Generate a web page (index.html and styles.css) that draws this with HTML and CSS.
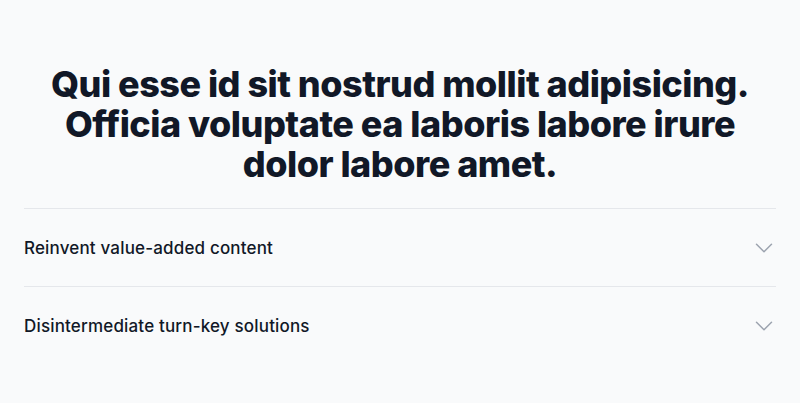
FILE: index.html
```html
<!DOCTYPE html>
<html lang="en">
<head>
<meta charset="utf-8">
<link rel="stylesheet" href="styles.css">
</head>
<body>
<div class="wrap">
  <div class="inner">
    <h2 class="title">Qui esse id sit nostrud mollit adipisicing. Officia voluptate ea laboris labore irure dolor labore amet.</h2>
    <dl class="faq">
      <div class="item">
        <dt>
          <button class="q" type="button">
            <span class="label">Reinvent value-added content</span>
            <span class="icon"><svg viewBox="0 0 24 24" fill="none" stroke="currentColor" stroke-width="1.5"><path stroke-linecap="round" stroke-linejoin="round" d="M19.5 8.25l-7.5 7.5-7.5-7.5"/></svg></span>
          </button>
        </dt>
      </div>
      <div class="item">
        <dt>
          <button class="q" type="button">
            <span class="label">Disintermediate turn-key solutions</span>
            <span class="icon"><svg viewBox="0 0 24 24" fill="none" stroke="currentColor" stroke-width="1.5"><path stroke-linecap="round" stroke-linejoin="round" d="M19.5 8.25l-7.5 7.5-7.5-7.5"/></svg></span>
          </button>
        </dt>
      </div>
    </dl>
  </div>
</div>
</body>
</html>
```

FILE: styles.css
```css
* { box-sizing: border-box; }
html, body { margin: 0; padding: 0; }
body {
  background: #f9fafb;
  font-family: Inter, "Noto Sans", sans-serif;
  color: #111827;
}
.wrap {
  padding: 64px 24px 40px;
}
.inner {
  max-width: 896px;
  margin: 0 auto;
}
.title {
  margin: 0;
  text-align: center;
  font-size: 36px;
  line-height: 40px;
  font-weight: 800;
  letter-spacing: -0.014em;
  color: #111827;
}
.faq {
  margin: 24px 0 0;
  border-top: 1px solid #e5e7eb;
}
.item + .item {
  border-top: 1px solid #e5e7eb;
}
.item {
  padding: 25px 0 24px;
}
dt { margin: 0; }
.q {
  display: flex;
  width: 100%;
  align-items: flex-start;
  justify-content: space-between;
  background: none;
  border: 0;
  padding: 0;
  text-align: left;
  color: #111827;
  font-family: inherit;
  cursor: pointer;
}
.label {
  font-size: 17px;
  line-height: 28px;
  font-weight: 500;
  letter-spacing: 0.01em;
}
.icon {
  margin-left: 24px;
  height: 28px;
  display: flex;
  align-items: center;
  color: #9ca3af;
}
.icon svg { width: 24px; height: 24px; }
```
